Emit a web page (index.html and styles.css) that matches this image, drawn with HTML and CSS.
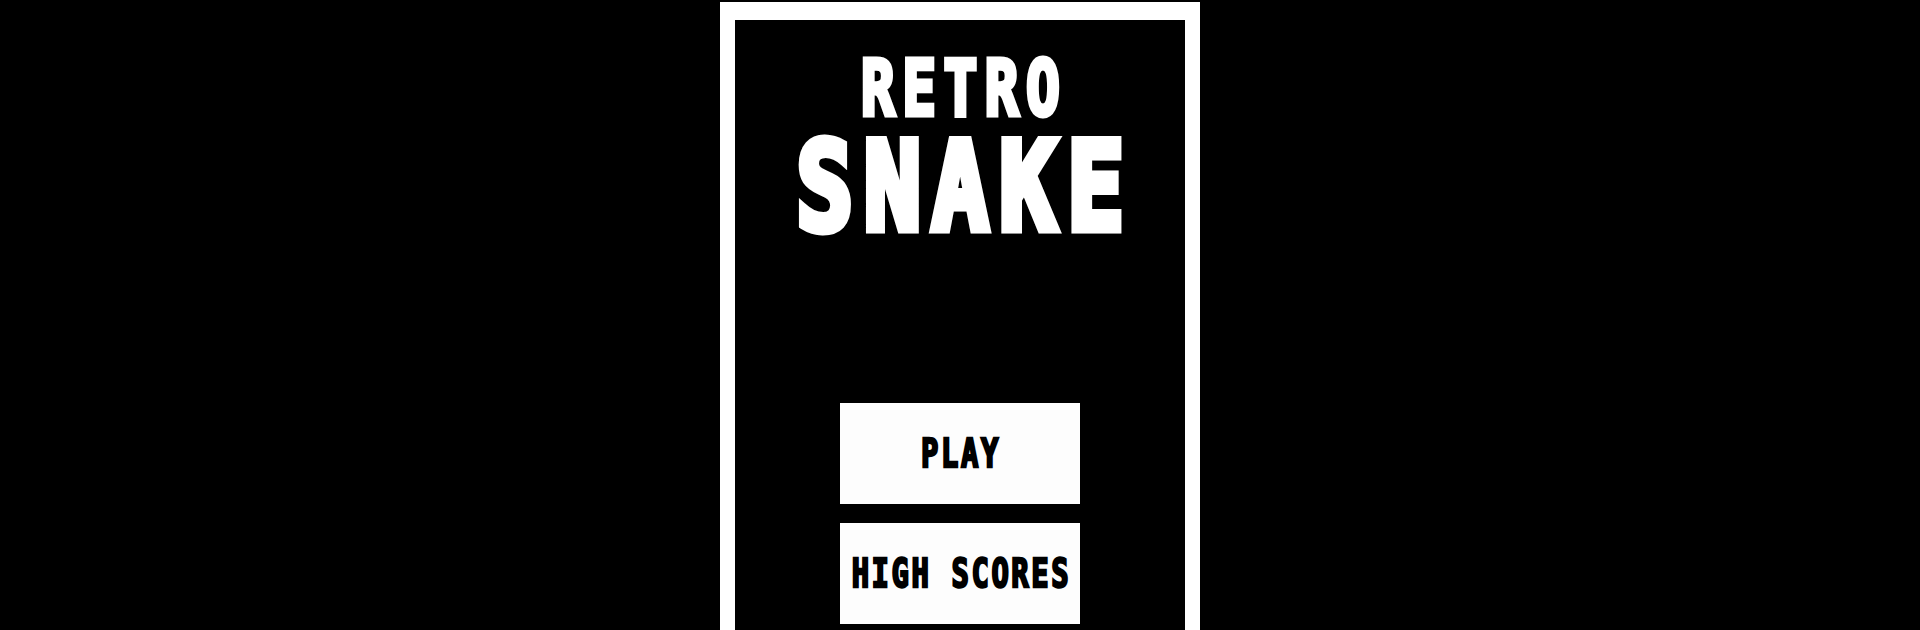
FILE: index.html
```html
<!DOCTYPE html>
<html lang="en">
<head>
    <meta charset="UTF-8">
    <meta name="viewport" content="width=device-width, initial-scale=1.0">
    <title>Retro Snake</title>
    <link rel="stylesheet" href="styles.css">
</head>
<body>
    <main class="frame">
        <h1 class="title">
            <span class="title-line retro">RETRO</span>
            <span class="title-line snake">SNAKE</span>
        </h1>
        <nav class="menu">
            <button class="menu-btn" id="play"><span class="menu-label">PLAY</span></button>
            <button class="menu-btn" id="scores"><span class="menu-label">HIGH SCORES</span></button>
        </nav>
    </main>
</body>
</html>
```

FILE: styles.css
```css
html, body {
    height: 100%;
}

body {
    margin: 0;
    background-color: #000;
    overflow: hidden;
    font-family: "DejaVu Sans Mono", "Liberation Mono", monospace;
}

.frame {
    box-sizing: border-box;
    width: 480px;
    min-height: 700px;
    margin: 2px auto 0;
    border: 15px solid #fff;
    border-top-width: 18px;
    border-bottom: none;
    background-color: #000;
    display: flex;
    flex-direction: column;
    align-items: center;
}

.title {
    margin: 31px 0 0;
    display: flex;
    flex-direction: column;
    align-items: center;
    font-weight: bold;
    color: #fff;
}

.title-line {
    display: inline-block;
    line-height: 1;
    -webkit-text-stroke-color: #fff;
}

.retro {
    font-size: 76px;
    letter-spacing: 10px;
    padding-left: 10px;
    -webkit-text-stroke-width: 5px;
    transform: scaleX(0.74);
}

.snake {
    font-size: 121px;
    letter-spacing: 14px;
    padding-left: 14px;
    -webkit-text-stroke-width: 9px;
    transform: scaleX(0.78);
}

.menu {
    margin-top: 155px;
    display: flex;
    flex-direction: column;
    gap: 19px;
}

.menu-btn {
    width: 240px;
    height: 101px;
    padding: 0;
    border: none;
    border-radius: 0;
    background-color: #fdfdfd;
    color: #000;
    font-family: inherit;
    font-weight: bold;
    font-size: 39px;
    line-height: 1;
    display: flex;
    align-items: center;
    justify-content: center;
    cursor: pointer;
}

.menu-label {
    display: inline-block;
    white-space: nowrap;
    letter-spacing: 3.5px;
    padding-left: 3.5px;
    -webkit-text-stroke: 2.5px #000;
    transform: scaleX(0.74);
}
```
